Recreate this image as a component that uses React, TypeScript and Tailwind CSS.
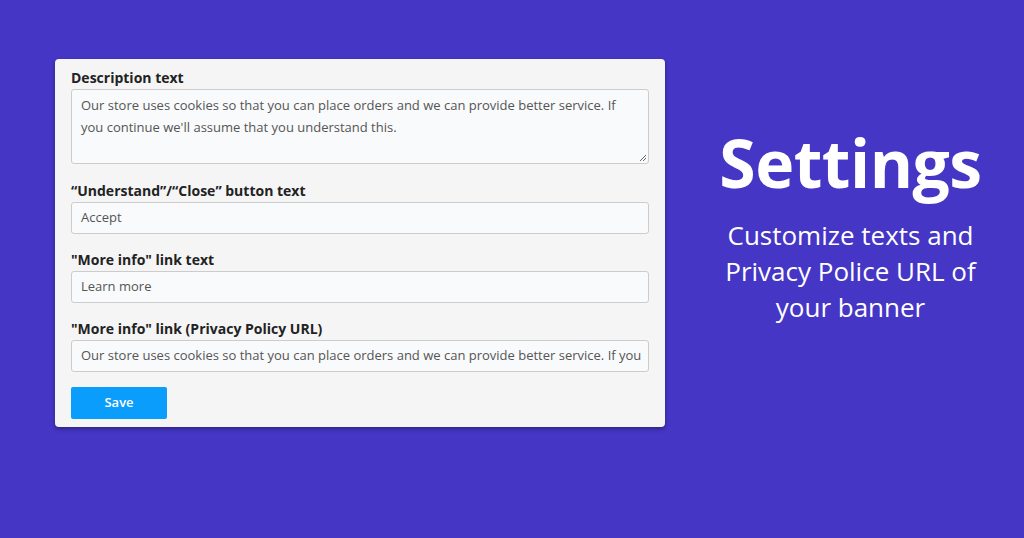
import React from "react";

const font = { fontFamily: '"Open Sans", "Noto Sans", sans-serif' };

function Label({ children }: { children: React.ReactNode }) {
  return (
    <div className="text-[14px] leading-[18px] font-bold text-[#222] mb-[2px] pt-[1px]">{children}</div>
  );
}

function Input({ value }: { value: string }) {
  return (
    <div className="h-[32px] w-full border border-[#cccccc] rounded-[3px] bg-[#f9fafb] px-[9px] flex items-center text-[13px] text-[#555] whitespace-nowrap overflow-hidden">
      {value}
    </div>
  );
}

export default function App() {
  return (
    <div
      className="w-[1024px] h-[538px] bg-[#4536c6] flex items-start overflow-hidden"
      style={font}
    >
      <div className="ml-[55px] mt-[59px] w-[610px] bg-[#f5f5f5] rounded-[4px] shadow-[0_2px_4px_rgba(0,0,0,0.35)] pt-[9px] pb-[8px] px-[16px] flex flex-col">
        <Label>Description text</Label>
        <div className="relative h-[75px] w-full border border-[#cccccc] rounded-[3px] bg-[#f9fafb] px-[9px] pt-[4px] text-[13px] leading-[22px] text-[#555]">
          Our store uses cookies so that you can place orders and we can provide better service. If you continue we'll assume that you understand this.
          <svg className="absolute right-[1px] bottom-[1px]" width="8" height="8" viewBox="0 0 8 8">
            <path d="M7 1 L1 7 M7 4 L4 7" stroke="#666" strokeWidth="1" />
          </svg>
        </div>
        <div className="mt-[17px]">
          <Label>“Understand”/“Close” button text</Label>
          <Input value="Accept" />
        </div>
        <div className="mt-[16px]">
          <Label>"More info" link text</Label>
          <Input value="Learn more" />
        </div>
        <div className="mt-[16px]">
          <Label>"More info" link (Privacy Policy URL)</Label>
          <Input value="Our store uses cookies so that you can place orders and we can provide better service. If you" />
        </div>
        <button className="mt-[15px] w-[96px] h-[32px] bg-[#0a9dfb] rounded-[2px] text-white text-[13px] font-semibold">
          Save
        </button>
      </div>
      <div className="flex-1 flex flex-col items-center text-white pl-[12px] mt-[119px]">
        <div className="text-[66px] leading-[86px] font-bold tracking-[-0.5px]">Settings</div>
        <div className="mt-[12px] text-[26px] leading-[36px] text-center">
          Customize texts and
          <br />
          Privacy Police URL of
          <br />
          your banner
        </div>
      </div>
    </div>
  );
}
